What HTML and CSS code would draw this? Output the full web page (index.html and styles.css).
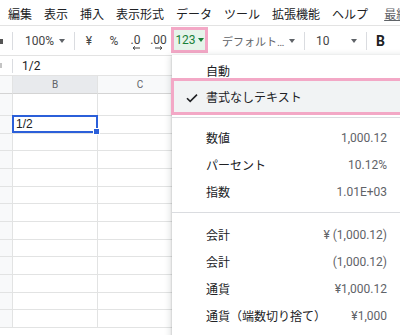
FILE: index.html
```html
<!DOCTYPE html>
<html lang="ja">
<head>
    <meta charset="UTF-8">
    <title>表示形式メニュー</title>
    <link rel="stylesheet" href="styles.css">
</head>
<body>
    <div class="menubar">
        <span>編集</span>
        <span>表示</span>
        <span>挿入</span>
        <span>表示形式</span>
        <span>データ</span>
        <span>ツール</span>
        <span>拡張機能</span>
        <span>ヘルプ</span>
        <span class="last-edit">最終編集</span>
    </div>

    <div class="toolbar">
        <span class="tb-edge"></span>
        <span class="tb-sep sep-first"></span>
        <span class="tb-zoom">100%</span>
        <span class="tb-caret"><i class="caret"></i></span>
        <span class="tb-sep sep-after"></span>
        <span class="tb-btn tb-yen">¥</span>
        <span class="tb-btn tb-pct">%</span>
        <span class="tb-btn tb-dec0">
            <span class="dec-text">.0</span>
            <svg width="8" height="4" viewBox="0 0 8 4"><path d="M8 2H1.5M3 0.3L1 2 3 3.7" fill="none" stroke="#444" stroke-width="1"/></svg>
        </span>
        <span class="tb-btn tb-dec00">
            <span class="dec-text">.00</span>
            <svg width="8" height="4" viewBox="0 0 8 4"><path d="M0 2H6.5M5 0.3L7 2 5 3.7" fill="none" stroke="#444" stroke-width="1"/></svg>
        </span>
        <span class="tb-format">123<i class="caret caret-green"></i></span>
        <span class="tb-font">デフォルト…</span>
        <span class="tb-caret"><i class="caret"></i></span>
        <span class="tb-sep sep-after"></span>
        <span class="tb-size">10</span>
        <span class="tb-caret"><i class="caret"></i></span>
        <span class="tb-sep sep-after"></span>
        <span class="tb-bold">B</span>
    </div>

    <div class="formula">
        <span class="fx-edge"></span>
        <span class="tb-sep fx-sep"></span>
        <span class="fx-value">1/2</span>
    </div>

    <div class="sheet">
        <div class="cell head"></div><div class="cell head active">B</div><div class="cell head">C</div><div class="cell head rest"></div>
        <div class="cell rowhead"></div><div class="cell"></div><div class="cell"></div><div class="cell rest"></div>
        <div class="cell rowhead"></div><div class="cell selected">1/2</div><div class="cell"></div><div class="cell rest"></div>
        <div class="cell rowhead"></div><div class="cell"></div><div class="cell"></div><div class="cell rest"></div>
        <div class="cell rowhead"></div><div class="cell"></div><div class="cell"></div><div class="cell rest"></div>
        <div class="cell rowhead"></div><div class="cell"></div><div class="cell"></div><div class="cell rest"></div>
        <div class="cell rowhead"></div><div class="cell"></div><div class="cell"></div><div class="cell rest"></div>
        <div class="cell rowhead"></div><div class="cell"></div><div class="cell"></div><div class="cell rest"></div>
        <div class="cell rowhead"></div><div class="cell"></div><div class="cell"></div><div class="cell rest"></div>
        <div class="cell rowhead"></div><div class="cell"></div><div class="cell"></div><div class="cell rest"></div>
        <div class="cell rowhead"></div><div class="cell"></div><div class="cell"></div><div class="cell rest"></div>
        <div class="cell rowhead"></div><div class="cell"></div><div class="cell"></div><div class="cell rest"></div>
        <div class="cell rowhead"></div><div class="cell"></div><div class="cell"></div><div class="cell rest"></div>
        <div class="cell rowhead"></div><div class="cell"></div><div class="cell"></div><div class="cell rest"></div>
    </div>

    <!-- 表示形式 > 数字 のドロップダウン -->
    <div class="format-menu">
        <div class="menu-item"><span class="label">自動</span></div>
        <div class="menu-item checked">
            <svg class="check" width="12" height="10" viewBox="0 0 12 10"><path d="M1 5.2L4.2 8.4 11 1.6" fill="none" stroke="#202124" stroke-width="1.6"/></svg>
            <span class="label">書式なしテキスト</span>
        </div>
        <div class="menu-sep"></div>
        <div class="menu-item"><span class="label">数値</span><span class="value">1,000.12</span></div>
        <div class="menu-item"><span class="label">パーセント</span><span class="value">10.12%</span></div>
        <div class="menu-item"><span class="label">指数</span><span class="value">1.01E+03</span></div>
        <div class="menu-sep sep-wide"></div>
        <div class="menu-item"><span class="label">会計</span><span class="value">¥ (1,000.12)</span></div>
        <div class="menu-item"><span class="label">会計</span><span class="value">(1,000.12)</span></div>
        <div class="menu-item"><span class="label">通貨</span><span class="value">¥1,000.12</span></div>
        <div class="menu-item"><span class="label">通貨（端数切り捨て）</span><span class="value">¥1,000</span></div>
    </div>
</body>
</html>
```

FILE: styles.css
```css
body {
    margin: 0;
    width: 400px;
    height: 335px;
    overflow: hidden;
    position: relative;
    background: #ffffff;
    font-family: Roboto, "Noto Sans CJK JP", sans-serif;
    color: #202124;
}

/* menu bar */
.menubar {
    height: 25px;
    border-bottom: 1px solid #e3e3e3;
    display: flex;
    align-items: center;
    gap: 12px;
    padding: 1px 0 0 8px;
    box-sizing: border-box;
    height: 26px;
    font-family: "Noto Sans CJK JP", sans-serif;
    font-size: 12px;
    white-space: nowrap;
}

.last-edit {
    margin-left: 4px;
    color: #5f6368;
    text-decoration: underline;
}

/* toolbar */
.toolbar {
    height: 30px;
    box-sizing: border-box;
    border-bottom: 1px solid #e3e3e3;
    display: flex;
    align-items: center;
    font-size: 12px;
    color: #444;
    white-space: nowrap;
}

.toolbar > span {
    flex: none;
}

.tb-edge {
    width: 3px;
    height: 5px;
    background: #555;
    margin-top: 1px;
}

.tb-sep {
    width: 1px;
    height: 18px;
    background: #dadce0;
}

.sep-first {
    margin-left: 9px;
}

.sep-after {
    margin-left: 5px;
}

.tb-zoom {
    width: 42px;
    padding-left: 12px;
    box-sizing: border-box;
}

.tb-caret {
    width: 14px;
    display: flex;
    justify-content: center;
}

.caret {
    display: inline-block;
    width: 0;
    height: 0;
    border-left: 3.5px solid transparent;
    border-right: 3.5px solid transparent;
    border-top: 4px solid #5f6368;
}

.caret-green {
    border-top-color: #188038;
    margin-left: 2px;
}

.tb-btn {
    display: flex;
    justify-content: center;
    align-items: center;
}

.tb-yen {
    width: 28px;
}

.tb-pct {
    width: 22px;
}

.tb-dec0,
.tb-dec00 {
    flex-direction: column;
    margin-top: 4px;
    gap: 1px;
}

.tb-dec0 {
    width: 21px;
}

.tb-dec00 {
    width: 25px;
}

.dec-text {
    line-height: 10px;
    font-size: 12px;
}

.tb-format {
    width: 37px;
    height: 26px;
    box-sizing: border-box;
    align-self: flex-start;
    margin-top: 1px;
    border: 3px solid #f3a8c6;
    background: #e6f4ea;
    color: #188038;
    display: flex;
    align-items: center;
    justify-content: center;
}

.tb-font {
    width: 77px;
    padding-left: 14px;
    box-sizing: border-box;
    font-size: 11px;
    color: #5f6368;
    overflow: hidden;
}

.tb-size {
    width: 42px;
    padding-left: 11px;
    box-sizing: border-box;
}

.tb-bold {
    padding-left: 9px;
    font-size: 14px;
    font-weight: bold;
    color: #202124;
}

/* formula bar */
.formula {
    height: 20px;
    box-sizing: border-box;
    border-bottom: 1px solid #e3e3e3;
    display: flex;
    align-items: center;
    font-size: 12px;
}

.fx-edge {
    width: 2px;
    height: 5px;
    background: #c4c4c4;
}

.fx-sep {
    height: 14px;
    margin-left: 10px;
}

.fx-value {
    margin-left: 9px;
}

/* grid */
.sheet {
    display: grid;
    grid-template-columns: 13px 85px 85px 1fr;
    grid-template-rows: 18px 22px repeat(12, 17.67px);
}

.cell {
    box-sizing: border-box;
    border-right: 1px solid #e2e3e3;
    border-bottom: 1px solid #e2e3e3;
    font-family: "Liberation Sans", Arial, sans-serif;
    font-size: 12px;
    line-height: 16px;
    padding-left: 3px;
}

.cell.rest {
    border-right: none;
}

.head {
    background: #f8f9fa;
    border-bottom-color: #d4d4d4;
    color: #5f6368;
    font-family: Roboto, sans-serif;
    font-size: 10px;
    text-align: center;
    padding-left: 0;
    line-height: 17px;
}

.head.active {
    background: #e8eaed;
}

.rowhead {
    background: #f8f9fa;
}

.selected {
    position: relative;
}

.selected::after {
    content: "";
    position: absolute;
    top: -1px;
    left: -1px;
    right: -1px;
    bottom: 0;
    border: 2px solid #2b5fd9;
}

.selected::before {
    content: "";
    position: absolute;
    right: -3px;
    bottom: -2px;
    width: 5px;
    height: 5px;
    background: #2b5fd9;
    border: 1px solid #ffffff;
    z-index: 1;
}

/* dropdown */
.format-menu {
    position: absolute;
    left: 172px;
    top: 55px;
    width: 240px;
    height: 290px;
    padding-top: 2px;
    box-sizing: border-box;
    background: #ffffff;
    box-shadow: 0 2px 6px 2px rgba(60, 64, 67, 0.15), 0 1px 2px rgba(60, 64, 67, 0.3);
    font-size: 12px;
}

.menu-item {
    height: 27px;
    display: flex;
    align-items: center;
    padding: 0 25px 0 34px;
    box-sizing: border-box;
    white-space: nowrap;
}

.menu-item .label {
    font-family: "Noto Sans CJK JP", sans-serif;
    color: #202124;
}

.menu-item .value {
    margin-left: auto;
    color: #5f6368;
}

.menu-item.checked {
    position: relative;
    z-index: 1;
    height: 37px;
    margin: -6px 7px -4px -1px;
    padding-left: 32px;
    border: 3px solid #f3a8c6;
    background: #f1f3f4;
}

.check {
    position: absolute;
    left: 12px;
    top: 12px;
}

.menu-sep {
    height: 1px;
    background: #dadce0;
    margin: 6px 0;
}

.sep-wide {
    margin: 7px 0 8px;
}
```
